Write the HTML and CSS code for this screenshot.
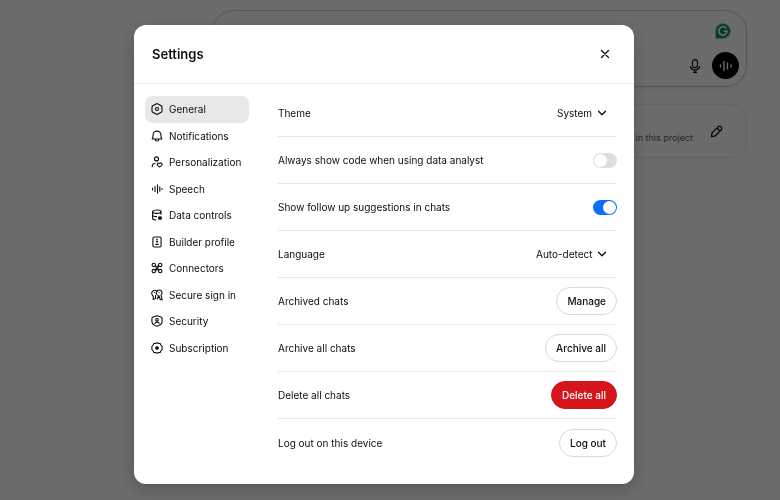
FILE: index.html
```html
<!DOCTYPE html>
<html lang="en">
<head>
    <meta charset="UTF-8">
    <meta name="viewport" content="width=device-width, initial-scale=1.0">
    <title>Settings</title>
    <link rel="stylesheet" href="styles.css">
</head>
<body>
    <main class="page">
        <div class="composer">
            <svg class="grammar-badge" viewBox="0 0 18 18"><path d="M1.500 16.500V9A7.500 7.500 0 1 1 9 16.500z" fill="#0f8a70" stroke="#a9d8cd" stroke-width="1"/><path d="M12 6A4.200 4.200 0 1 0 13.200 9.300H10" fill="none" stroke="#fff" stroke-width="1.600"/></svg>
            <div class="composer-actions">
                <button class="icon-button" aria-label="Dictate">
                    <svg class="mic" viewBox="0 0 12 14"><rect x="3.500" y="0.700" width="5" height="8" rx="2.500"/><path d="M1.300 7.500c.8 2.300 2.400 3.500 4.700 3.500s3.900-1.200 4.700-3.500M6 11v2.300M4.500 13.300h3"/></svg>
                </button>
                <button class="voice-button" aria-label="Voice mode">
                    <svg viewBox="0 0 14 14"><path d="M1.500 6v2M5 2.500v9M8.500 4v6M12 6v2"/></svg>
                </button>
            </div>
        </div>
        <div class="project-card">
            <span>in this project</span>
            <button class="icon-button" aria-label="Edit">
                <svg class="pencil" viewBox="0 0 14 14"><path d="M1.500 12.500l.7-4L8.700 2a2.300 2.300 0 0 1 3.300 3.300l-6.500 6.500zM7.500 3.200l3.300 3.300"/></svg>
            </button>
        </div>
    </main>

    <div class="backdrop">
        <div class="modal" role="dialog" aria-labelledby="title">
            <header class="modal-header">
                <h1 id="title">Settings</h1>
                <button class="icon-button" aria-label="Close">
                    <svg class="close" viewBox="0 0 10 10"><path d="M1.500 1.500l7 7M8.500 1.500l-7 7"/></svg>
                </button>
            </header>

            <div class="modal-body">
                <nav class="tabs">
                    <button class="tab active">
                        <svg viewBox="0 0 12 12"><path d="M5 1q1-.7 2 0l3.200 1.800q.8.500.8 1.300v3.800q0 .8-.8 1.300L7 11q-1 .7-2 0L1.800 9.200Q1 8.700 1 7.900V4.100q0-.8.800-1.300z"/><circle cx="6" cy="6" r="1.500"/></svg>
                        General
                    </button>
                    <button class="tab">
                        <svg viewBox="0 0 12 12"><path d="M1.200 9C2 7.800 2 6.700 2.100 5a3.900 3.900 0 0 1 7.800 0c.1 1.700.1 2.800.9 4zM4 9.200c.3 2.400 3.700 2.400 4 0"/></svg>
                        Notifications
                    </button>
                    <button class="tab">
                        <svg viewBox="0 0 12 12"><circle cx="5.500" cy="2.900" r="2"/><path d="M1.200 10.800c0-2 .9-3.300 2.700-3.500M8.600 11C6.900 10.200 6.200 9.200 6.200 8.200c0-1.300 1.700-1.600 2.400-.5.700-1.100 2.500-.8 2.500.5 0 1-.8 2-2.500 2.800z"/></svg>
                        Personalization
                    </button>
                    <button class="tab">
                        <svg viewBox="0 0 12 12"><path d="M1.500 5v2M4 3.500v5M6.500 1.800v8.400M8.800 3.800v4.400M11 5.500v1"/></svg>
                        Speech
                    </button>
                    <button class="tab">
                        <svg viewBox="0 0 12 12"><ellipse cx="5.800" cy="2.700" rx="4.200" ry="1.700"/><path d="M1.600 2.700v6.500c0 1 1.400 1.700 3.200 1.800M10 2.700v2.500M1.600 6c0 1 1.600 1.600 4 1.600"/><circle cx="9" cy="9" r="1" fill="currentColor"/><path d="M9 7.200v3.600M7.500 8.200l3 1.600M10.500 8.200l-3 1.600"/></svg>
                        Data controls
                    </button>
                    <button class="tab">
                        <svg viewBox="0 0 12 12"><rect x="1.900" y="1" width="8.200" height="10" rx="1.500"/><circle cx="6" cy="5.600" r=".5" fill="currentColor"/><path d="M4.800 8.500q1.200-.8 2.400 0zM5.500 3.200h1"/></svg>
                        Builder profile
                    </button>
                    <button class="tab">
                        <svg viewBox="0 0 12 12"><circle cx="2.800" cy="2.900" r="1.700"/><circle cx="9.200" cy="2.900" r="1.700"/><circle cx="2.800" cy="9.100" r="1.700"/><circle cx="9.200" cy="9.100" r="1.700"/><path d="M4.500 4.800l.8.200L7.500 3.400M7.500 7.200l-.8-.2M4.500 8.600L7.500 7.200M4.500 7.500l3-2.700"/></svg>
                        Connectors
                    </button>
                    <button class="tab">
                        <svg viewBox="0 0 12 12"><path d="M2.200 10.500V7A3.100 3.100 0 1 1 6.300 2.500M4.500 6.500v3l-2.300 1M6.300 6.200A2.900 2.900 0 1 1 10 6.200l1.200 4.600H9.400L7.800 6.500l-1.500 3.500"/><path d="M3.500 3.500h.1M8 3.500h.1"/></svg>
                        Secure sign in
                    </button>
                    <button class="tab">
                        <svg viewBox="0 0 12 12"><path d="M6 .8l4 1.300c.8.300 1.100 1 1.100 1.700v2.700c0 2.500-2.300 3.900-5.100 4.700C3.200 10.400.9 9 .9 6.500V3.800c0-.7.3-1.400 1.100-1.700z"/><circle cx="6" cy="4.800" r="1.300"/><path d="M3.800 8.400c.6-1.700 3.800-1.700 4.400 0"/></svg>
                        Security
                    </button>
                    <button class="tab">
                        <svg viewBox="0 0 12 12"><path d="M6 .7l1.500.7 1.700.1.700 1.600L11.200 4.500 11 6l.2 1.500-1.300 1.400-.7 1.600-1.700.1L6 11.300l-1.500-.7-1.700-.1-.7-1.600L.8 7.500 1 6 .8 4.500l1.300-1.400.7-1.600 1.700-.1z"/><circle cx="6" cy="6" r="1.300" fill="currentColor"/></svg>
                        Subscription
                    </button>
                </nav>

                <div class="rows">
                    <div class="row">
                        <label for="theme">Theme</label>
                        <div class="dropdown">
                            <select id="theme"><option>System</option></select>
                            <svg viewBox="0 0 10 10"><path d="M1.500 3.300L5 6.800l3.500-3.500"/></svg>
                        </div>
                    </div>
                    <div class="row">
                        <label for="show-code">Always show code when using data analyst</label>
                        <input class="switch" type="checkbox" id="show-code">
                    </div>
                    <div class="row">
                        <label for="follow-up">Show follow up suggestions in chats</label>
                        <input class="switch" type="checkbox" id="follow-up" checked>
                    </div>
                    <div class="row">
                        <label for="language">Language</label>
                        <div class="dropdown">
                            <select id="language"><option>Auto-detect</option></select>
                            <svg viewBox="0 0 10 10"><path d="M1.500 3.300L5 6.800l3.500-3.500"/></svg>
                        </div>
                    </div>
                    <div class="row">
                        <span>Archived chats</span>
                        <button class="pill">Manage</button>
                    </div>
                    <div class="row">
                        <span>Archive all chats</span>
                        <button class="pill">Archive all</button>
                    </div>
                    <div class="row">
                        <span>Delete all chats</span>
                        <button class="pill danger">Delete all</button>
                    </div>
                    <div class="row">
                        <span>Log out on this device</span>
                        <button class="pill">Log out</button>
                    </div>
                </div>
            </div>
        </div>
    </div>
</body>
</html>
```
FILE: styles.css
```css
* {
    box-sizing: border-box;
}
body {
    margin: 0;
    background-color: white;
    color: #0d0d0d;
    font-family: Inter, "Liberation Sans", sans-serif;
    font-size: 10px;
    line-height: 16px;
}
button, select {
    font: inherit;
    color: inherit;
    background: none;
    border: none;
    padding: 0;
    margin: 0;
    cursor: pointer;
}
svg {
    display: block;
    flex: none;
    fill: none;
    stroke: currentColor;
    stroke-linecap: round;
    stroke-linejoin: round;
}

/* page behind the dialog */
.page {
    display: flex;
    flex-direction: column;
    gap: 17px;
    padding: 10px 33px 0 212px;
}
.composer {
    display: flex;
    flex-direction: column;
    align-items: flex-end;
    justify-content: space-between;
    min-height: 77px;
    padding: 11px 7px 7px;
    border: 1px solid #d0d0d0;
    border-radius: 22px;
    box-shadow: 0 1px 3px rgba(0,0,0,0.1);
}
.grammar-badge {
    width: 18px;
    height: 18px;
    margin-right: 7px;
}
.composer-actions {
    display: flex;
    align-items: center;
    gap: 11px;
}
.mic {
    width: 12px;
    height: 14px;
    stroke-width: 1.2;
}
.voice-button {
    display: flex;
    align-items: center;
    justify-content: center;
    width: 27px;
    height: 27px;
    border-radius: 50%;
    background-color: black;
    color: white;
}
.voice-button svg {
    width: 14px;
    height: 14px;
    stroke-width: 1.4;
}
.project-card {
    display: flex;
    align-items: center;
    justify-content: flex-end;
    gap: 17px;
    min-height: 54px;
    padding: 0 23px;
    border: 1px solid #ececec;
    border-radius: 16px;
    color: #5d5d5d;
    font-size: 9px;
}
.project-card span {
    padding-top: 14px;
}
.pencil {
    width: 13px;
    height: 13px;
    color: #0d0d0d;
    stroke-width: 1.4;
}

/* dialog */
.backdrop {
    position: fixed;
    inset: 0;
    display: flex;
    align-items: flex-start;
    justify-content: center;
    padding: 25px 12px 16px 0;
    background-color: rgba(0,0,0,0.58);
}
.modal {
    width: 100%;
    max-width: 500px;
    background-color: white;
    border-radius: 12px;
    box-shadow: 0 5px 18px rgba(0,0,0,0.2);
}
.modal-header {
    display: flex;
    align-items: center;
    justify-content: space-between;
    padding: 19px 24px 19px 18px;
    border-bottom: 1px solid #e7e7e7;
}
.modal-header h1 {
    margin: 0;
    font-size: 13px;
    line-height: 20px;
    font-weight: 600;
}
.close {
    width: 10px;
    height: 10px;
    stroke-width: 1.3;
}
.modal-body {
    display: flex;
    align-items: flex-start;
    gap: 29px;
    padding: 6px 17px 18px 11px;
}
.tabs {
    display: grid;
    grid-auto-rows: 1fr;
    flex: none;
    width: 104px;
    min-height: 265px;
    margin-top: 6px;
}
.tab {
    display: flex;
    align-items: center;
    gap: 6px;
    padding: 0 6px;
    border-radius: 8px;
    white-space: nowrap;
}
.tab.active {
    background-color: #e7e7e7;
}
.tab svg {
    width: 12px;
    height: 12px;
    stroke-width: 1.1;
}
.rows {
    flex: 1;
}
.row {
    display: flex;
    align-items: center;
    justify-content: space-between;
    min-height: 47px;
    border-bottom: 1px solid #e7e7e7;
}
.row:last-child {
    border-bottom: none;
}
.dropdown {
    display: flex;
    align-items: center;
    gap: 4px;
    padding-right: 10px;
}
.dropdown select {
    appearance: none;
}
.dropdown svg {
    width: 10px;
    height: 10px;
    stroke-width: 1.3;
}
.switch {
    appearance: none;
    width: 24px;
    height: 15px;
    margin: 0;
    padding: 1px;
    border-radius: 8px;
    background-color: #dedede;
    cursor: pointer;
}
.switch::before {
    content: "";
    display: block;
    width: 13px;
    height: 13px;
    border-radius: 50%;
    background-color: white;
}
.switch:checked {
    padding-left: 10px;
    background-color: #0d6efd;
}
.pill {
    padding: 5px 10px;
    border: 1px solid #d9d9d9;
    border-radius: 14px;
    font-weight: 500;
}
.pill.danger {
    border-color: #d5141c;
    background-color: #d5141c;
    color: white;
}
```
